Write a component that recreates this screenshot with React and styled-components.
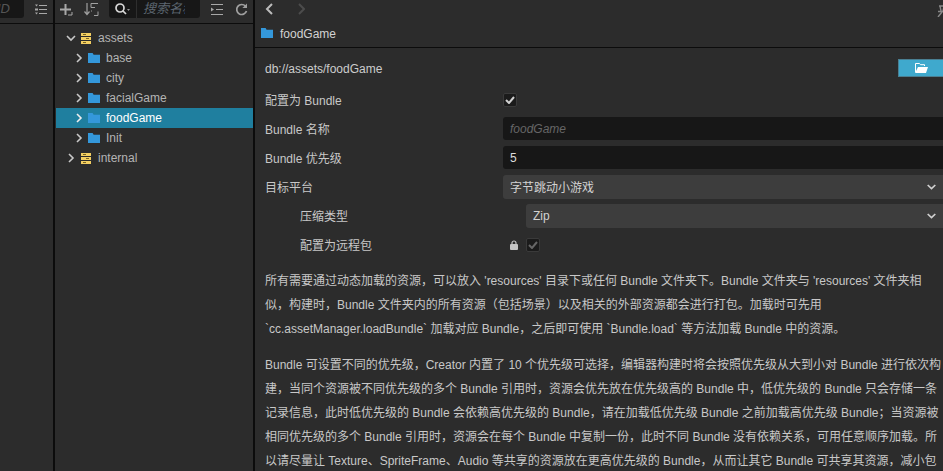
import React from 'react'
import styled, { createGlobalStyle } from 'styled-components'

const GlobalStyle = createGlobalStyle`
    html, body {
        margin: 0;
        padding: 0;
        background: #2c2c2c;
    }
    body {
        font-family: "Liberation Sans", "Noto Sans CJK SC", sans-serif;
        font-size: 12px;
        color: #ccc;
    }
`

const Page = styled.div`
    display: flex;
    width: 943px;
    height: 471px;
    overflow: hidden;
    background: #2c2c2c;
`

const Side = styled.div`
    flex: none;
    width: ${p => p.$width}px;
    box-sizing: border-box;
    border-right: 2px solid #0c0c0c;
    display: flex;
    flex-direction: column;
`

const Toolbar = styled.div`
    height: 24px;
    flex: none;
    box-sizing: border-box;
    border-bottom: 1px solid #0c0c0c;
    display: flex;
    align-items: flex-start;
    overflow: hidden;
`

const IdBox = styled.div`
    width: 24px;
    height: 18px;
    flex: none;
    background: #171717;
    border-radius: 0 0 3px 0;
    font-style: italic;
    font-size: 13px;
    color: #555;
    line-height: 18px;
    text-align: right;
    padding-right: 14px;
    margin-left: -14px;
`

const ToolIcon = styled.svg`
    flex: none;
    margin-top: ${p => p.$top ?? 3}px;
    margin-left: ${p => p.$left ?? 0}px;
`

const SearchBox = styled.div`
    width: 91px;
    height: 18px;
    flex: none;
    margin-left: 10px;
    background: #171717;
    border-radius: 0 0 3px 3px;
    display: flex;
    align-items: center;
`

const SearchButton = styled.div`
    width: 28px;
    height: 18px;
    flex: none;
    box-sizing: border-box;
    border-right: 1px solid #2e2e2e;
    display: flex;
    align-items: center;
    padding-left: 6px;
`

const SearchText = styled.div`
    width: 42px;
    margin-left: 6px;
    overflow: hidden;
    white-space: nowrap;
    font-style: italic;
    color: #5c6670;
    font-size: 13px;
    line-height: 18px;
`

const Tree = styled.div`
    padding: 4px 0 0 1px;
`

const TreeRow = styled.div`
    height: 20px;
    display: flex;
    align-items: center;
    padding-left: ${p => p.$indent}px;
    color: ${p => (p.$selected ? '#fff' : '#b4b4b4')};
    background: ${p => (p.$selected ? '#1f7f9f' : 'transparent')};
`

const Arrow = styled.svg`
    flex: none;
    width: 10px;
    height: 10px;
    margin-right: ${p => p.$gap}px;
`

const TreeName = styled.span`
    margin-left: ${p => p.$gap}px;
`

const Main = styled.div`
    flex: 1;
    min-width: 0;
    display: flex;
    flex-direction: column;
`

const NavBar = styled.div`
    height: 22px;
    flex: none;
    box-sizing: border-box;
    display: flex;
    align-items: center;
    gap: 24px;
    padding: 0 0 4px 10px;
    position: relative;
`

const Title = styled.div`
    height: 26px;
    flex: none;
    box-sizing: border-box;
    border-bottom: 1px solid #0c0c0c;
    display: flex;
    align-items: center;
    gap: 7px;
    padding: 0 0 2px 6px;
    color: #d2d2d2;
`

const Body = styled.div`
    padding: 11px 0 0 10px;
`

const PathRow = styled.div`
    height: 18px;
    display: flex;
    align-items: center;
    justify-content: space-between;
    margin-bottom: 8px;
`

const PathText = styled.span`
    padding-top: 1px;
`

const OpenButton = styled.div`
    width: 45px;
    height: 18px;
    box-sizing: border-box;
    background: #3fa9cd;
    border: 1px solid #4a7f92;
    border-right: none;
    display: flex;
    align-items: center;
    justify-content: center;
`

const PropRow = styled.div`
    height: 29px;
    display: flex;
    align-items: center;
    padding-left: ${p => (p.$nested ? 35 : 0)}px;
`

const PropLabel = styled.div`
    width: ${p => p.$width ?? 238}px;
    flex: none;
    color: #c8c8c8;
`

const Check = styled.div`
    width: 14px;
    height: 14px;
    flex: none;
    box-sizing: border-box;
    background: #1b1b1b;
    border: 1px solid #3a3a3a;
    border-radius: 2px;
    display: flex;
    align-items: center;
    justify-content: center;
    margin-left: ${p => p.$left ?? 0}px;
`

const Field = styled.div`
    flex: 1;
    height: 23px;
    box-sizing: border-box;
    background: #171717;
    border-radius: 3px 0 0 3px;
    padding: 1px 0 0 7px;
    line-height: 23px;
    font-style: ${p => (p.$hint ? 'italic' : 'normal')};
    color: ${p => (p.$hint ? '#666' : '#ddd')};
`

const Select = styled.div`
    flex: 1;
    height: 24px;
    box-sizing: border-box;
    background: #3d3d3d;
    border-radius: 3px 0 0 3px;
    padding: 0 7px 0 7px;
    display: flex;
    align-items: center;
    justify-content: space-between;
    color: #d2d2d2;
`

const Notes = styled.div`
    margin-top: 10px;
`

const Para = styled.p`
    margin: 0 0 12px;
    line-height: 24px;
    color: #c8c8c8;
`

const Folder = ({ size = 12 }) => (
    <svg width={size} height={size * 0.84} viewBox="0 0 12 10" style={{ flex: 'none' }}>
        <path d="M0 0h4.6l1 1.6H12V10H0z" fill="#3498db" />
    </svg>
)

const DbIcon = () => (
    <svg width="10" height="11" viewBox="0 0 10 11" style={{ flex: 'none' }}>
        <path d="M0 0h10v3H0zM0 4h10v3H0zM0 8h10v3H0z" fill="#f3cf62" />
        <path d="M2 1.5h3M5 5.5h3M2 9.5h3" stroke="#7a6420" strokeWidth="1" />
    </svg>
)

const Chevron = ({ open, color = '#c8c8c8', gap }) => (
    <Arrow viewBox="0 0 10 10" $gap={gap}>
        <path
            d={open ? 'M1 3l4 4 4-4' : 'M3 1l4 4-4 4'}
            fill="none"
            stroke={color}
            strokeWidth="1.6"
        />
    </Arrow>
)

const NavArrow = ({ back }) => (
    <svg width="8" height="12" viewBox="0 0 8 12" style={{ flex: 'none' }}>
        <path
            d={back ? 'M7 1L2 6l5 5' : 'M2 1l5 5-5 5'}
            fill="none"
            stroke={back ? '#bcbcbc' : '#4c4c4c'}
            strokeWidth="2"
        />
    </svg>
)

const Caret = () => (
    <svg width="9" height="6" viewBox="0 0 9 6">
        <path d="M.7 1l3.8 3.6L8.3 1" fill="none" stroke="#d0d0d0" strokeWidth="1.7" />
    </svg>
)

const Tick = ({ color = '#d0d0d0' }) => (
    <svg width="10" height="8" viewBox="0 0 10 8">
        <path d="M1 4l3 3 5-6" fill="none" stroke={color} strokeWidth="2" />
    </svg>
)

const Lock = () => (
    <svg width="8" height="10" viewBox="0 0 8 10" style={{ flex: 'none', marginLeft: 7 }}>
        <path d="M2 4.5V3a2 2 0 0 1 4 0v1.5" fill="none" stroke="#c4c4c4" strokeWidth="1.2" />
        <rect x="0" y="4" width="8" height="6" rx="1" fill="#c4c4c4" />
    </svg>
)

const ListIcon = ({ left }) => (
    <ToolIcon $left={left} $top={4} width="12" height="11" viewBox="0 0 12 11">
        <path d="M4 1.5h8M4 5.5h8M4 9.5h8" stroke="#a8a8a8" strokeWidth="1.2" />
        <path d="M0 0.5l1.5 2 1.5-2zM0 4.5h3v2H0zM0 8.5l1.5 2 1.5-2z" fill="#a8a8a8" />
    </ToolIcon>
)

const PlusIcon = () => (
    <ToolIcon $left={5} $top={4} width="13" height="12" viewBox="0 0 13 12">
        <path d="M5.5 0v11M0 5.5h11" stroke="#a8a8a8" strokeWidth="2" />
        <path d="M8 11h4V8" fill="none" stroke="#a8a8a8" strokeWidth="1" />
    </ToolIcon>
)

const SortIcon = () => (
    <ToolIcon $left={11} $top={3} width="15" height="13" viewBox="0 0 15 13">
        <path d="M3 0v11M0.5 8.5L3 11.5l2.5-3" fill="none" stroke="#a0a0a0" strokeWidth="1.2" />
        <path d="M7 .5h7M7 .5v4M7 4.5h4M7 8h1M10 12.5h4v-4" fill="none" stroke="#a0a0a0" strokeWidth="1" />
    </ToolIcon>
)

const SearchIcon = () => (
    <svg width="15" height="12" viewBox="0 0 15 12" style={{ flex: 'none' }}>
        <circle cx="5" cy="5" r="4" fill="none" stroke="#d8d8d8" strokeWidth="1.7" />
        <path d="M8 8l3 3" stroke="#d8d8d8" strokeWidth="1.7" />
        <path d="M12 6h3l-1.5 2z" fill="#999" />
    </svg>
)

const OutdentIcon = () => (
    <ToolIcon $left={11} $top={4} width="12" height="11" viewBox="0 0 12 11">
        <path d="M0 .5h12M5 5.5h7M0 10.5h12" stroke="#a8a8a8" strokeWidth="1" />
        <path d="M0 3.5l3 2-3 2z" fill="#a8a8a8" />
    </ToolIcon>
)

const RefreshIcon = () => (
    <ToolIcon $left={12} $top={3} width="13" height="13" viewBox="0 0 13 13">
        <path d="M10.5 3.2A5 5 0 1 0 11.5 8" fill="none" stroke="#a0a0a0" strokeWidth="1.7" />
        <path d="M12 .5v4.6H7.4z" fill="#a0a0a0" />
    </ToolIcon>
)

const OpenFolderIcon = () => (
    <svg width="13" height="10" viewBox="0 0 13 10">
        <path d="M.5 9V.5h4l1 1.2h4V3" fill="none" stroke="#fff" strokeWidth="1" />
        <path d="M3 4h10l-2 6H0z" fill="#fff" />
    </svg>
)

const PinIcon = styled.svg`
    position: absolute;
    top: 5px;
    right: -4px;
`

const folders = ['base', 'city', 'facialGame', 'foodGame', 'Init']

const App = () => {
    return (
        <Page>
            <GlobalStyle />
            <Side $width={55}>
                <Toolbar>
                    <IdBox>ID</IdBox>
                    <ListIcon left={11} />
                </Toolbar>
            </Side>
            <Side $width={200}>
                <Toolbar>
                    <PlusIcon />
                    <SortIcon />
                    <SearchBox>
                        <SearchButton>
                            <SearchIcon />
                        </SearchButton>
                        <SearchText>搜索名称</SearchText>
                    </SearchBox>
                    <OutdentIcon />
                    <RefreshIcon />
                </Toolbar>
                <Tree>
                    <TreeRow $indent={10}>
                        <Chevron open gap={5} />
                        <DbIcon />
                        <TreeName $gap={7}>assets</TreeName>
                    </TreeRow>
                    {folders.map(name => (
                        <TreeRow key={name} $indent={18} $selected={name === 'foodGame'}>
                            <Chevron gap={4} color={name === 'foodGame' ? '#eee' : '#c8c8c8'} />
                            <Folder />
                            <TreeName $gap={6}>{name}</TreeName>
                        </TreeRow>
                    ))}
                    <TreeRow $indent={10}>
                        <Chevron gap={5} />
                        <DbIcon />
                        <TreeName $gap={7}>internal</TreeName>
                    </TreeRow>
                </Tree>
            </Side>
            <Main>
                <NavBar>
                    <NavArrow back />
                    <NavArrow />
                    <PinIcon width="10" height="12" viewBox="0 0 10 12">
                        <path d="M2 1h6M3 1l1 5M7 1L6 6M1 6.5h8M5 7l-4 5" fill="none" stroke="#888" strokeWidth="1.4" />
                    </PinIcon>
                </NavBar>
                <Title>
                    <Folder />
                    foodGame
                </Title>
                <Body>
                    <PathRow>
                        <PathText>db://assets/foodGame</PathText>
                        <OpenButton>
                            <OpenFolderIcon />
                        </OpenButton>
                    </PathRow>
                    <PropRow>
                        <PropLabel>配置为 Bundle</PropLabel>
                        <Check>
                            <Tick />
                        </Check>
                    </PropRow>
                    <PropRow>
                        <PropLabel>Bundle 名称</PropLabel>
                        <Field $hint>foodGame</Field>
                    </PropRow>
                    <PropRow>
                        <PropLabel>Bundle 优先级</PropLabel>
                        <Field>5</Field>
                    </PropRow>
                    <PropRow>
                        <PropLabel>目标平台</PropLabel>
                        <Select>
                            字节跳动小游戏
                            <Caret />
                        </Select>
                    </PropRow>
                    <PropRow $nested>
                        <PropLabel $width={226}>压缩类型</PropLabel>
                        <Select>
                            Zip
                            <Caret />
                        </Select>
                    </PropRow>
                    <PropRow $nested>
                        <PropLabel $width={203}>配置为远程包</PropLabel>
                        <Lock />
                        <Check $left={8}>
                            <Tick color="#666" />
                        </Check>
                    </PropRow>
                    <Notes>
                        <Para>
                            所有需要通过动态加载的资源，可以放入 'resources' 目录下或任何 Bundle 文件夹下。Bundle 文件夹与 'resources' 文件夹相似，构建时，Bundle 文件夹内的所有资源（包括场景）以及相关的外部资源都会进行打包。加载时可先用 `cc.assetManager.loadBundle` 加载对应 Bundle，之后即可使用 `Bundle.load` 等方法加载 Bundle 中的资源。
                        </Para>
                        <Para>
                            Bundle 可设置不同的优先级，Creator 内置了 10 个优先级可选择，编辑器构建时将会按照优先级从大到小对 Bundle 进行依次构建，当同个资源被不同优先级的多个 Bundle 引用时，资源会优先放在优先级高的 Bundle 中，低优先级的 Bundle 只会存储一条记录信息，此时低优先级的 Bundle 会依赖高优先级的 Bundle，请在加载低优先级 Bundle 之前加载高优先级 Bundle；当资源被相同优先级的多个 Bundle 引用时，资源会在每个 Bundle 中复制一份，此时不同 Bundle 没有依赖关系，可用任意顺序加载。所以请尽量让 Texture、SpriteFrame、Audio 等共享的资源放在更高优先级的 Bundle，从而让其它 Bundle 可共享其资源，减小包体。
                        </Para>
                    </Notes>
                </Body>
            </Main>
        </Page>
    )
}

export default App
